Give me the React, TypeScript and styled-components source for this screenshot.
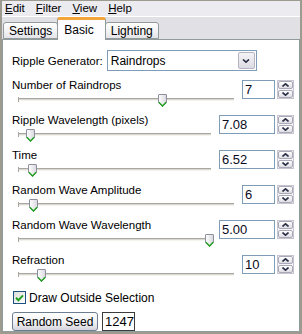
import React from "react";
import styled, { createGlobalStyle } from "styled-components";

const Global = createGlobalStyle`
    html, body {
        margin: 0;
        padding: 0;
        background: #ffffff;
    }
    * {
        box-sizing: border-box;
    }
`

const Window = styled.div`
    width: 302px;
    height: 334px;
    display: flex;
    flex-direction: column;
    background: #ecebef;
    border: 2px solid #9d9a8f;
    border-top-width: 1px;
    font-family: "Liberation Sans", Arial, sans-serif;
    font-size: 11.5px;
    color: #000;
`

const MenuBar = styled.div`
    height: 15px;
    display: flex;
    align-items: center;
    gap: 5px;
`

const MenuItem = styled.div`
    padding: 0 3px;
    line-height: 15px;
    u {
        text-decoration: underline;
        text-underline-offset: 1px;
    }
`

const TabStrip = styled.div`
    height: 24px;
    display: flex;
    align-items: flex-end;
    padding-left: 1px;
    border-top: 1px solid #ffffff;
    background: #e1e0e5;
    position: relative;
    z-index: 1;
`

const Tab = styled.div<{ $active?: boolean }>`
    height: ${p => (p.$active ? "23px" : "17px")};
    margin-bottom: ${p => (p.$active ? "-1px" : "0")};
    padding: ${p => (p.$active ? "0 11px 0 6px" : "0 5px")};
    display: flex;
    align-items: center;
    font-size: 12px;
    border: 1px solid #919b9c;
    border-bottom: ${p => (p.$active ? "none" : "1px solid #919b9c")};
    border-top: ${p => (p.$active ? "3px solid #f3a53c" : "1px solid #919b9c")};
    border-radius: 3px 3px 0 0;
    background: ${p =>
        p.$active ? "#fcfcfe" : "linear-gradient(#ffffff, #f1f0f2 60%, #e4e3e8)"};
    margin-left: ${p => (p.$active ? "-1px" : "0")};
    margin-right: ${p => (p.$active ? "-1px" : "0")};
    position: relative;
    z-index: ${p => (p.$active ? 2 : 1)};
`

const Panel = styled.div`
    flex: 1;
    display: flex;
    flex-direction: column;
    background: #ffffff;
    border: 1px solid #919b9c;
    padding: 10px 5px 0 9px;
`

const GenRow = styled.div`
    display: flex;
    align-items: center;
    height: 21px;
    gap: 4px;
    margin-bottom: 7px;
`

const Label = styled.div`
    line-height: 14px;
    height: 14px;
    white-space: nowrap;
`

const Combo = styled.div`
    width: 150px;
    height: 21px;
    border: 1px solid #7f9db9;
    background: #fff;
    display: flex;
    align-items: center;
    justify-content: space-between;
    padding: 1px 1px 1px 3px;
    font-size: 12px;
`

const ComboButton = styled.div`
    width: 17px;
    height: 100%;
    border: 1px solid #b5b4c2;
    border-radius: 2px;
    background: linear-gradient(#f4f4f7, #dcdbe3);
    display: flex;
    align-items: center;
    justify-content: center;
`

const ParamRow = styled.div`
    display: flex;
    align-items: flex-start;
    height: 35px;
`

const ParamLeft = styled.div`
    flex: 1;
    display: flex;
    flex-direction: column;
`

const Slider = styled.div`
    position: relative;
    height: 21px;
    margin: 0 8px 0 6px;
`

const Track = styled.div`
    position: absolute;
    left: 0;
    right: 0;
    top: 6px;
    height: 3px;
    border-top: 1px solid #a8a7a2;
    border-bottom: 1px solid #f4f3ee;
    background: #d9d8d2;
    &::before {
        content: "";
        position: absolute;
        left: 0;
        top: -2px;
        width: 1px;
        height: 5px;
        background: #a8a7a2;
    }
`

const Thumb = styled.svg<{ $pos: number }>`
    position: absolute;
    top: 2px;
    left: calc(${p => p.$pos * 100}% - 4px);
`

const Spinner = styled.div`
    display: flex;
    gap: 2px;
    margin-top: 2px;
`

const NumBox = styled.div<{ $w: number }>`
    width: ${p => p.$w}px;
    height: 19px;
    border: 1px solid #7f9db9;
    background: #fff;
    font-size: 13px;
    line-height: 17px;
    padding-left: 2px;
    color: #0a0a20;
`

const SpinGroup = styled.div`
    width: 17px;
    height: 19px;
    border: 1px solid #c5c4cf;
    display: flex;
    flex-direction: column;
    gap: 1px;
    background: #f6f6f8;
`

const SpinButton = styled.div`
    flex: 1;
    border: 1px solid #a9a8b6;
    border-radius: 2px;
    background: linear-gradient(#ffffff, #dedde5);
    display: flex;
    align-items: center;
    justify-content: center;
`

const CheckRow = styled.label`
    display: flex;
    align-items: center;
    gap: 3px;
    height: 15px;
    margin: 2px 0 0 1px;
    font-size: 12px;
`

const CheckBox = styled.div`
    width: 13px;
    height: 13px;
    border: 1px solid #1c5180;
    background: linear-gradient(135deg, #dcdcd7, #ffffff);
    display: flex;
    align-items: center;
    justify-content: center;
`

const SeedRow = styled.div`
    display: flex;
    align-items: center;
    gap: 4px;
    margin-top: 7px;
`

const PushButton = styled.div`
    width: 86px;
    height: 19px;
    border: 1px solid #6d7e92;
    border-radius: 3px;
    background: linear-gradient(#ffffff, #f1f1f4 55%, #d5d4dc);
    display: flex;
    align-items: center;
    justify-content: center;
    font-size: 12px;
`

const SeedBox = styled.div`
    width: 33px;
    height: 19px;
    border: 1px solid #3c3c3c;
    background: #fff;
    font-size: 13px;
    line-height: 17px;
    padding-left: 2px;
    display: flex;
    align-items: center;
`

const Caret = styled.span`
    display: inline-block;
    width: 1px;
    height: 14px;
    background: #000;
    margin-left: 1px;
`

const Chevron = ({ up, size = 7 }: { up?: boolean; size?: number }) => (
    <svg width={size} height={4} viewBox="0 0 7 4">
        <path
            d={up ? "M0.5 3.5 L3.5 0.8 L6.5 3.5" : "M0.5 0.5 L3.5 3.2 L6.5 0.5"}
            fill="none"
            stroke="#2b2f45"
            strokeWidth="1.6"
        />
    </svg>
)

const ThumbIcon = ({ pos }: { pos: number }) => (
    <Thumb $pos={pos} width="9" height="13" viewBox="0 0 9 13">
        <defs>
            <linearGradient id="tg" x1="0" y1="0" x2="1" y2="0">
                <stop offset="0" stopColor="#ffffff" />
                <stop offset="1" stopColor="#d8d7de" />
            </linearGradient>
        </defs>
        <path d="M0.5 1 Q0.5 0.5 1 0.5 L8 0.5 Q8.5 0.5 8.5 1 L8.5 8.5 L4.5 12.5 L0.5 8.5 Z" fill="url(#tg)" stroke="#8e8f9e" />
        <path d="M0.8 8.3 L4.5 12 L8.2 8.3" fill="none" stroke="#21a121" strokeWidth="1.4" />
    </Thumb>
)

interface Param {
    label: string;
    value: string;
    box: number;
    pos: number;
}

const params: Param[] = [
    { label: "Number of Raindrops", value: "7", box: 33, pos: 0.667 },
    { label: "Ripple Wavelength (pixels)", value: "7.08", box: 56, pos: 0.06 },
    { label: "Time", value: "6.52", box: 56, pos: 0.07 },
    { label: "Random Wave Amplitude", value: "6", box: 33, pos: 0.07 },
    { label: "Random Wave Wavelength", value: "5.00", box: 56, pos: 0.99 },
    { label: "Refraction", value: "10", box: 33, pos: 0.105 },
]

const App = () => {
    return (
        <>
            <Global />
            <Window>
                <MenuBar>
                    <MenuItem><u>E</u>dit</MenuItem>
                    <MenuItem><u>F</u>ilter</MenuItem>
                    <MenuItem><u>V</u>iew</MenuItem>
                    <MenuItem><u>H</u>elp</MenuItem>
                </MenuBar>
                <TabStrip>
                    <Tab>Settings</Tab>
                    <Tab $active>Basic</Tab>
                    <Tab>Lighting</Tab>
                </TabStrip>
                <Panel>
                    <GenRow>
                        <Label>Ripple Generator:</Label>
                        <Combo>
                            <span>Raindrops</span>
                            <ComboButton>
                                <Chevron size={8} />
                            </ComboButton>
                        </Combo>
                    </GenRow>
                    {params.map(p => (
                        <ParamRow key={p.label}>
                            <ParamLeft>
                                <Label>{p.label}</Label>
                                <Slider>
                                    <Track />
                                    <ThumbIcon pos={p.pos} />
                                </Slider>
                            </ParamLeft>
                            <Spinner>
                                <NumBox $w={p.box}>{p.value}</NumBox>
                                <SpinGroup>
                                    <SpinButton><Chevron up /></SpinButton>
                                    <SpinButton><Chevron /></SpinButton>
                                </SpinGroup>
                            </Spinner>
                        </ParamRow>
                    ))}
                    <CheckRow>
                        <CheckBox>
                            <svg width="9" height="8" viewBox="0 0 9 8">
                                <path d="M1 3.8 L3.4 6.2 L8 1.4" fill="none" stroke="#21a121" strokeWidth="2" />
                            </svg>
                        </CheckBox>
                        Draw Outside Selection
                    </CheckRow>
                    <SeedRow>
                        <PushButton>Random Seed</PushButton>
                        <SeedBox>1247<Caret /></SeedBox>
                    </SeedRow>
                </Panel>
            </Window>
        </>
    )
};

export default App;
